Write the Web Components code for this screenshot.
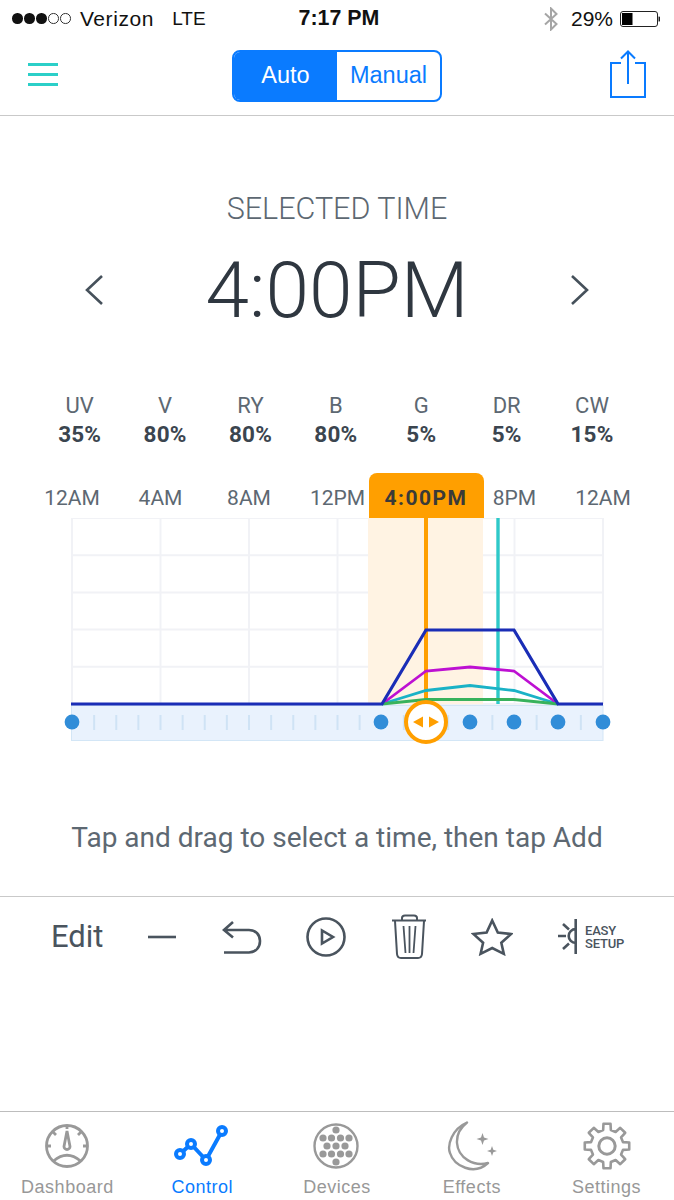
<!DOCTYPE html>
<html>
<head>
<meta charset="utf-8">
<title>Control</title>
<style>
    html, body { margin: 0; padding: 0; background: #fff; }
    body { width: 674px; height: 1200px; overflow: hidden; font-family: "Liberation Sans", sans-serif; }
    app-screen { width: 674px; height: 1200px; }
</style>
</head>
<body>
<app-screen>
    <status-bar></status-bar>
    <top-nav></top-nav>
    <time-picker label="SELECTED TIME" time="4:00PM"></time-picker>
    <channel-row>
        <channel-stat name="UV">35%</channel-stat>
        <channel-stat name="V">80%</channel-stat>
        <channel-stat name="RY">80%</channel-stat>
        <channel-stat name="B">80%</channel-stat>
        <channel-stat name="G">5%</channel-stat>
        <channel-stat name="DR">5%</channel-stat>
        <channel-stat name="CW">15%</channel-stat>
    </channel-row>
    <light-chart></light-chart>
    <hint-text>Tap and drag to select a time, then tap Add</hint-text>
    <edit-toolbar></edit-toolbar>
    <tab-bar>
        <tab-item label="Dashboard" icon="dashboard"></tab-item>
        <tab-item label="Control" icon="control" active></tab-item>
        <tab-item label="Devices" icon="devices"></tab-item>
        <tab-item label="Effects" icon="effects"></tab-item>
        <tab-item label="Settings" icon="settings"></tab-item>
    </tab-bar>
</app-screen>

<script>
class AppScreen extends HTMLElement {
    constructor() {
        super();
        this.attachShadow({ mode: 'open' });
        this.shadowRoot.innerHTML = `
            <style>
                :host { display: flex; flex-direction: column; background: #fff; }
                ::slotted(tab-bar) { margin-top: auto; }
            </style>
            <slot></slot>
        `;
    }
}
customElements.define('app-screen', AppScreen);

class StatusBar extends HTMLElement {
    constructor() {
        super();
        this.attachShadow({ mode: 'open' });
        this.shadowRoot.innerHTML = `
            <style>
                :host {
                    display: grid;
                    grid-template-columns: 1fr auto 1fr;
                    align-items: center;
                    height: 37px;
                    padding: 0 14px 0 12px;
                    font: 21px "Liberation Sans", sans-serif;
                    color: #111;
                }
                .left, .right { display: flex; align-items: center; }
                .right { justify-content: flex-end; }
                .dots { display: flex; gap: 1.6px; margin-right: 9px; }
                .dots i { width: 10.5px; height: 10.5px; border-radius: 50%; background: #111; box-sizing: border-box; }
                .dots i.off { background: none; border: 1px solid #333; }
                .carrier { letter-spacing: 0.6px; }
                .lte { margin-left: 18px; font-size: 19px; }
                .time { font-weight: bold; font-size: 21.4px; margin: 0 -3px 0 3px; }
                svg { display: block; }
                .bt { margin-right: 13px; }
                .pct { margin-right: 7px; }
            </style>
            <div class="left">
                <div class="dots"><i></i><i></i><i></i><i class="off"></i><i class="off"></i></div>
                <span class="carrier">Verizon</span><span class="lte">LTE</span>
            </div>
            <div class="time">7:17 PM</div>
            <div class="right">
                <svg class="bt" width="14" height="24" viewBox="0 0 14 24" fill="none" stroke="#a5a5a5" stroke-width="2">
                    <path d="M1 6.5 L12.5 17 L7 22.5 V1.5 L12.5 7 L1 17.5"/>
                </svg>
                <span class="pct">29%</span>
                <svg width="40" height="16" viewBox="0 0 40 16">
                    <rect x=".5" y=".5" width="37" height="15" rx="2.5" fill="none" stroke="#222"/>
                    <rect x="2" y="2" width="10.5" height="12" fill="#000"/>
                    <path d="M38.5 5.5 a2.5 2.5 0 0 1 0 5z" fill="#222"/>
                </svg>
            </div>
        `;
    }
}
customElements.define('status-bar', StatusBar);

class TopNav extends HTMLElement {
    constructor() {
        super();
        this.attachShadow({ mode: 'open' });
        this.shadowRoot.innerHTML = `
            <style>
                :host {
                    display: flex;
                    align-items: center;
                    justify-content: space-between;
                    height: 79px;
                    padding: 0 28px;
                    box-sizing: border-box;
                    border-bottom: 1px solid #c9c9c9;
                }
                svg { display: block; }
                .burger { width: 30px; display: flex; flex-direction: column; gap: 7px; margin-top: -3px; }
                .burger i { height: 3px; background: #2bcfc8; }
                .seg {
                    display: flex;
                    width: 210px;
                    height: 52px;
                    box-sizing: border-box;
                    border: 2px solid #0a7bff;
                    border-radius: 8px;
                    overflow: hidden;
                    font: 23.5px "Liberation Sans", sans-serif;
                    margin: -1px 0 0 6px;
                }
                .seg span { flex: 1; display: flex; align-items: center; justify-content: center; color: #0a7bff; }
                .seg .on { background: #0a7bff; color: #fff; }
            </style>
            <div class="burger"><i></i><i></i><i></i></div>
            <div class="seg"><span class="on">Auto</span><span>Manual</span></div>
            <svg width="36" height="48" viewBox="0 0 36 48" fill="none" stroke="#0a7bff" stroke-width="2" style="margin-top:-4px">
                <path d="M11 13 H1 V47 H35 V13 H25"/>
                <path d="M18 34 V2 M11 8.5 L18 1.5 L25 8.5"/>
            </svg>
        `;
    }
}
customElements.define('top-nav', TopNav);

class TimePicker extends HTMLElement {
    constructor() {
        super();
        this.attachShadow({ mode: 'open' });
        this.shadowRoot.innerHTML = `
            <style>
                :host { display: block; padding-top: 75px; text-align: center; font-family: Roboto, sans-serif; }
                .label { font-weight: 300; font-size: 30.5px; line-height: 36px; color: #5d6872; }
                .row {
                    display: flex;
                    align-items: center;
                    justify-content: space-between;
                    padding: 0 84px;
                    height: 84px;
                    margin-top: 21px;
                }
                .time { font-weight: 300; font-size: 78.4px; line-height: 84px; color: #2f3740; }
                svg { display: block; }
            </style>
            <div class="label"></div>
            <div class="row">
                <svg width="20" height="32" viewBox="0 0 20 32" fill="none" stroke="#46515b" stroke-width="2.6"><path d="M18 2 L3 16 L18 30"/></svg>
                <div class="time"></div>
                <svg width="20" height="32" viewBox="0 0 20 32" fill="none" stroke="#46515b" stroke-width="2.6"><path d="M2 2 L17 16 L2 30"/></svg>
            </div>
        `;
    }

    connectedCallback() {
        this.shadowRoot.querySelector('.label').textContent = this.getAttribute('label');
        this.shadowRoot.querySelector('.time').textContent = this.getAttribute('time');
    }
}
customElements.define('time-picker', TimePicker);

class ChannelRow extends HTMLElement {
    constructor() {
        super();
        this.attachShadow({ mode: 'open' });
        this.shadowRoot.innerHTML = `
            <style>
                :host {
                    display: grid;
                    grid-template-columns: repeat(7, 85.4px);
                    padding: 59px 0 0 37px;
                }
            </style>
            <slot></slot>
        `;
    }
}
customElements.define('channel-row', ChannelRow);

class ChannelStat extends HTMLElement {
    constructor() {
        super();
        this.attachShadow({ mode: 'open' });
        this.shadowRoot.innerHTML = `
            <style>
                :host { display: block; text-align: center; font-family: Roboto, sans-serif; }
                .name { font-size: 22px; line-height: 29px; color: #5d6872; }
                .val { font-size: 22.5px; line-height: 29px; font-weight: 700; color: #3b454f; letter-spacing: 0.2px; }
            </style>
            <div class="name"></div>
            <div class="val"><slot></slot></div>
        `;
    }

    connectedCallback() {
        this.shadowRoot.querySelector('.name').textContent = this.getAttribute('name');
    }
}
customElements.define('channel-stat', ChannelStat);

class LightChart extends HTMLElement {
    constructor() {
        super();
        this.attachShadow({ mode: 'open' });
        // grid lines, tick marks
        let grid = '';
        for (let i = 0; i < 7; i++) {
            const x = 72 + i * 88.5;
            grid += `<line x1="${x}" y1="518" x2="${x}" y2="704"/>`;
        }
        for (let i = 0; i < 6; i++) {
            const y = 518 + i * 37.2;
            grid += `<line x1="72" y1="${y}" x2="603" y2="${y}"/>`;
        }
        let ticks = '';
        for (let i = 1; i < 24; i++) {
            const x = 72 + i * 22.125;
            if ([14, 18, 20, 22].includes(i)) continue;
            ticks += `<line x1="${x}" y1="715" x2="${x}" y2="730"/>`;
        }
        const dots = [72, 381, 470, 514, 558, 603]
            .map(x => `<circle cx="${x}" cy="722" r="7.4"/>`).join('');

        const labels = ['12AM', '4AM', '8AM', '12PM', '', '8PM', '12AM']
            .map(t => t ? `<span>${t}</span>` : '<span class="pill">4:00PM</span>').join('');

        this.shadowRoot.innerHTML = `
            <style>
                :host { display: block; padding-top: 24px; font-family: Roboto, sans-serif; }
                .labels {
                    display: grid;
                    grid-template-columns: repeat(7, 88.5px);
                    padding-left: 27.75px;
                    height: 45px;
                }
                span {
                    justify-self: center;
                    align-self: end;
                    font-size: 21px;
                    line-height: 40px;
                    white-space: nowrap;
                    color: #5d6872;
                }
                .pill {
                    width: 115px;
                    height: 45px;
                    box-sizing: border-box;
                    padding-top: 5px;
                    text-align: center;
                    background: #ff9f00;
                    border-radius: 8px 8px 0 0;
                    font-weight: 700;
                    letter-spacing: 1.5px;
                    color: #3a3a38;
                    z-index: 1;
                }
                svg { display: block; }
            </style>
            <div class="labels">${labels}</div>
            <svg width="674" height="230" viewBox="0 518 674 230" fill="none">
                <g stroke="#f1f2f6" stroke-width="2">${grid}</g>
                <rect x="368" y="518" width="115" height="186" fill="#fff3e3"/>
                <rect x="71.5" y="705.5" width="531.5" height="35" fill="#e9f2fd" stroke="#d3e6f6"/>
                <g stroke="#cfe3f5" stroke-width="2">${ticks}</g>
                <line x1="426" y1="518" x2="426" y2="704" stroke="#ff9f00" stroke-width="4"/>
                <line x1="498" y1="518" x2="498" y2="704" stroke="#2ec9c9" stroke-width="3.4"/>
                <path d="M382 704 L426 690.5 L470 685.5 L514 690.5 L558 704" stroke="#1ab2c6" stroke-width="2.8"/>
                <path d="M382 704 L426 671 L470 667 L514 671 L558 704" stroke="#bd10d2" stroke-width="2.8"/>
                <path d="M382 704 L426 699.5 L514 699.5 L558 704" stroke="#38b25c" stroke-width="3"/>
                <path d="M71 704 H382 L426 630 H514 L558 704 H603" stroke="#1a2db6" stroke-width="3.2"/>
                <g fill="#318dd8">${dots}</g>
                <circle cx="426" cy="722" r="20" fill="#fff" stroke="#ff9f00" stroke-width="4"/>
                <path d="M413 722 L423 716.5 V727.5Z M439 722 L429 716.5 V727.5Z" fill="#ff9f00"/>
            </svg>
        `;
    }
}
customElements.define('light-chart', LightChart);

class HintText extends HTMLElement {
    constructor() {
        super();
        this.attachShadow({ mode: 'open' });
        this.shadowRoot.innerHTML = `
            <style>
                :host {
                    display: block;
                    text-align: center;
                    font: 28px/32px Roboto, sans-serif;
                    color: #5d6872;
                    padding-top: 74px;
                    padding-bottom: 42px;
                }
            </style>
            <slot></slot>
        `;
    }
}
customElements.define('hint-text', HintText);

class EditToolbar extends HTMLElement {
    constructor() {
        super();
        this.attachShadow({ mode: 'open' });
        const s = 'fill="none" stroke="#4a545e" stroke-width="2.6"';
        this.shadowRoot.innerHTML = `
            <style>
                :host {
                    display: flex;
                    align-items: center;
                    height: 80px;
                    box-sizing: border-box;
                    border-top: 1px solid #c9c9c9;
                    padding-left: 51px;
                    color: #4a545e;
                    font-family: Roboto, sans-serif;
                }
                .edit { font-size: 31px; width: 97px; }
                svg { display: block; flex: none; }
                .easy { font-size: 13px; line-height: 13px; font-weight: 500; letter-spacing: -0.2px; margin-left: 6px; }
            </style>
            <span class="edit">Edit</span>
            <svg width="28" height="4" viewBox="0 0 28 4" ${s} style="margin-right:46px"><path d="M0 2 H28"/></svg>
            <svg width="40" height="34" viewBox="222 919 40 34" ${s} style="margin-right:44px">
                <path d="M233 921 L224 929 L233 936.5 M224 929 H249 C256 929 260 934 260 940 C260 946 256 951.5 249 951.5 H224"/>
            </svg>
            <svg width="40" height="40" viewBox="0 0 40 40" ${s} style="margin-right:45px">
                <circle cx="20" cy="20" r="18.5"/>
                <path d="M16 13.5 V26.5 L27 20Z"/>
            </svg>
            <svg width="36" height="46" viewBox="391 913 36 46" fill="none" stroke="#4a545e" stroke-width="2" stroke-linejoin="round" style="margin-right:44px">
                <path d="M392 919.5 H426 M402 919 V917 Q402 914.5 405 914.5 H414 Q417 914.5 417 917 V919"/>
                <path d="M395 920 L397 953 Q397.4 957 401 957 H418 Q421.6 957 422 953 L424 920"/>
                <path d="M403.5 925 L405.5 952 M409.5 925 V952 M415.5 925 L413.5 952" stroke-width="1.8"/>
            </svg>
            <svg width="42" height="38" viewBox="470.5 917 42 38" ${s} stroke-linejoin="miter" style="margin-right:44px">
                <path d="M491.7 919.5 L497.3 931.5 L510.5 933 L500.8 941.8 L503.3 952.8 L491.7 947 L480.1 952.8 L482.6 941.8 L472.9 933 L486.1 931.5Z"/>
            </svg>
            <svg width="22" height="38" viewBox="557 917 22 38" ${s}>
                <path d="M575.7 918 V953 M575.7 928 A7 7 0 0 0 575.7 942 M558 935 H566 M563 923 L569 928.5 M563 948 L569 942.5"/>
            </svg>
            <div class="easy">EASY<br>SETUP</div>
        `;
    }
}
customElements.define('edit-toolbar', EditToolbar);

class TabBar extends HTMLElement {
    constructor() {
        super();
        this.attachShadow({ mode: 'open' });
        this.shadowRoot.innerHTML = `
            <style>
                :host {
                    display: grid;
                    grid-template-columns: repeat(5, 1fr);
                    height: 89px;
                    box-sizing: border-box;
                    border-top: 1px solid #bdbdbd;
                }
            </style>
            <slot></slot>
        `;
    }
}
customElements.define('tab-bar', TabBar);

function gearPath(cx, cy, outer, inner, teeth) {
    const pts = [];
    const step = Math.PI * 2 / teeth;
    for (let i = 0; i < teeth; i++) {
        const a = i * step - Math.PI / 2;
        const p = (r, d) => `${(cx + r * Math.cos(a + d)).toFixed(2)} ${(cy + r * Math.sin(a + d)).toFixed(2)}`;
        pts.push(p(inner, -step * 0.3), p(outer, -step * 0.2), p(outer, step * 0.2), p(inner, step * 0.3));
    }
    return 'M' + pts.join(' L') + 'Z';
}

function deviceDots() {
    // 1-4-3-4-1 rows of dots
    const rows = [[-16, [0]], [-8, [-13, -4.5, 4.5, 13]], [0, [-9, 0, 9]], [8, [-13, -4.5, 4.5, 13]], [16, [0]]];
    let out = '';
    for (const [dy, xs] of rows) {
        for (const dx of xs) out += `<circle cx="${25 + dx}" cy="${26 + dy}" r="3.6"/>`;
    }
    return out;
}

const TAB_ICONS = {
    dashboard: `<g fill="none" stroke="#999" stroke-width="2.8">
            <circle cx="26" cy="26" r="20.5"/>
            <path d="M26 6 V9 M12 12 L15 15 M40 12 L37 15 M6 26 H10 M46 26 H42"/>
            <path d="M26 11 L23 26.5 A3 3 0 0 0 29 26.5Z"/>
            <path d="M12.5 41 Q26 29.5 39.5 41"/>
        </g>`,
    control: `<g fill="#fff" stroke="#0a7bff" stroke-width="4">
            <path d="M12 34 L23 24 L38 40 L54 11" fill="none"/>
            <circle cx="12" cy="34" r="4"/>
            <circle cx="23" cy="24" r="4"/>
            <circle cx="38" cy="40" r="4"/>
            <circle cx="54" cy="11" r="4"/>
        </g>`,
    devices: `<circle cx="25" cy="26" r="21.5" fill="none" stroke="#999" stroke-width="2.4"/><g fill="#999">${deviceDots()}</g>`,
    effects: `<path d="M21 2.5 C6 9 1 25 4 33 C8 46 28 56 42 43 C28 47 12 38 11 23 C10.5 15 14 8 21 2.5Z" fill="none" stroke="#999" stroke-width="2.4" stroke-linejoin="round"/>
        <path d="M36.5 13 L38 17.5 L42.5 19 L38 20.5 L36.5 25 L35 20.5 L30.5 19 L35 17.5Z M46 26 L47.3 29.7 L51 31 L47.3 32.3 L46 36 L44.7 32.3 L41 31 L44.7 29.7Z" fill="#999"/>`,
    settings: `<path d="${gearPath(26, 26, 22.5, 16.5, 8)}" fill="none" stroke="#999" stroke-width="2.6" stroke-linejoin="round"/>
        <circle cx="26" cy="26" r="8.2" fill="none" stroke="#999" stroke-width="3"/>`
};

class TabItem extends HTMLElement {
    constructor() {
        super();
        this.attachShadow({ mode: 'open' });
    }

    connectedCallback() {
        const active = this.hasAttribute('active');
        const name = this.getAttribute('icon');
        const wide = name === 'control';
        this.shadowRoot.innerHTML = `
            <style>
                :host {
                    display: flex;
                    flex-direction: column;
                    align-items: center;
                    padding-top: 8px;
                    font: 18px/22px "Liberation Sans", sans-serif;
                    letter-spacing: 0.5px;
                    color: ${active ? '#0a7bff' : '#989898'};
                }
                svg { display: block; margin-bottom: 4px; }
            </style>
            <svg width="${wide ? 68 : 52}" height="52" viewBox="0 0 ${wide ? 68 : 52} 52">${TAB_ICONS[name]}</svg>
            <span>${this.getAttribute('label')}</span>
        `;
    }
}
customElements.define('tab-item', TabItem);
</script>
</body>
</html>
